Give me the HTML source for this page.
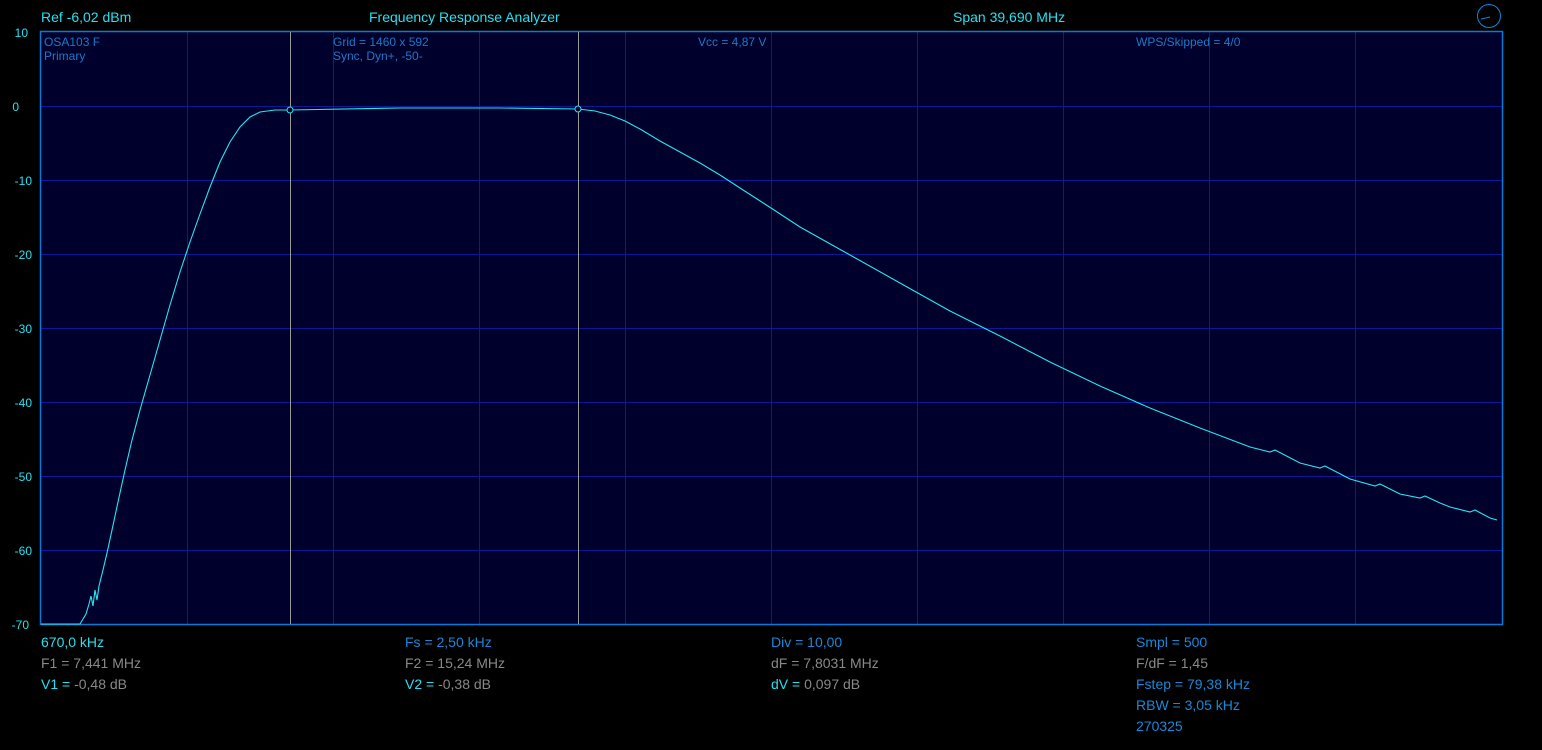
<!DOCTYPE html><html><head><meta charset="utf-8"><style>html,body{margin:0;padding:0;background:#000;width:1542px;height:750px;overflow:hidden}svg{display:block}text{font-family:"Liberation Sans",sans-serif}</style></head><body>
<svg width="1542" height="750" xmlns="http://www.w3.org/2000/svg">
<rect width="1542" height="750" fill="#000"/>
<rect x="41" y="32" width="1461" height="592" fill="#00002c"/>
<g stroke="#0b1a96" stroke-width="1">
<path d="M41 106.5H1502M41 180.5H1502M41 254.5H1502M41 328.5H1502M41 402.5H1502M41 476.5H1502M41 550.5H1502"/>
<path d="M187.5 32V624M333.5 32V624M479.5 32V624M625.5 32V624M771.5 32V624M917.5 32V624M1063.5 32V624M1209.5 32V624M1355.5 32V624"/>
</g>
<rect x="40.5" y="31.5" width="1462" height="593" fill="none" stroke="#0a7ad8" stroke-width="1.5"/>
<path d="M290.5 32V624M578.5 32V624" stroke="#9a9a9a" stroke-width="1"/>
<polyline fill="none" stroke="#22e8f0" stroke-width="1.1" points="41,624 80,624 86,614 89,604 91,596 93,606 95,590 97,600 99,586 103,570 107,553 112,530 118,502 125,470 132,440 140,410 150,375 160,340 170,305 180,272 190,242 200,214 210,187 220,162 230,142 240,127 250,117 260,112 275,110 290,110 400,108 500,108 578,109 595,111 610,115 625,121 640,129 660,141 680,152 700,163 720,175 740,188 771,208 800,227 850,255 900,283 950,311 1000,336 1050,362 1100,386 1150,408 1200,428 1250,447 1270,452 1275,450 1300,463 1320,468 1325,466 1350,479 1375,486 1380,484 1400,494 1420,498 1425,496 1440,503 1450,507 1470,512 1475,510 1490,518 1497,520"/>
<circle cx="290" cy="110" r="3" fill="#00002c" stroke="#22e8f0"/>
<circle cx="578" cy="109" r="3" fill="#00002c" stroke="#22e8f0"/>
<circle cx="1489" cy="16" r="11.5" fill="none" stroke="#0a8ad8" stroke-width="1"/>
<path d="M1481 19L1490 17" stroke="#0a8ad8"/>
<g font-size="12" fill="#26e0f0" text-anchor="end">
<text x="28" y="37">10</text><text x="19" y="111">0</text><text x="32" y="185">-10</text><text x="32" y="259">-20</text><text x="32" y="333">-30</text><text x="32" y="407">-40</text><text x="32" y="481">-50</text><text x="32" y="555">-60</text><text x="29" y="629">-70</text>
</g>
<g font-size="14" fill="#26e0f0">
<text x="41" y="22">Ref  -6,02 dBm</text>
<text x="369" y="22">Frequency Response Analyzer</text>
<text x="953" y="22">Span 39,690 MHz</text>
</g>
<g font-size="12" fill="#1a7ac8">
<text x="44" y="46">OSA103 F</text><text x="44" y="60">Primary</text>
<text x="333" y="46">Grid = 1460 x 592</text><text x="333" y="60">Sync,  Dyn+,  -50-</text>
<text x="698" y="46">Vcc = 4,87 V</text>
<text x="1136" y="46">WPS/Skipped  = 4/0</text>
</g>
<g font-size="14">
<text x="41" y="647" fill="#26e0f0">670,0 kHz</text>
<text x="41" y="668" fill="#888">F1 = 7,441 MHz</text>
<text x="41" y="689" fill="#888"><tspan fill="#26e0f0">V1 =</tspan> -0,48 dB</text>
<text x="405" y="647" fill="#1a88d8">Fs = 2,50 kHz</text>
<text x="405" y="668" fill="#888">F2 = 15,24 MHz</text>
<text x="405" y="689" fill="#888"><tspan fill="#26e0f0">V2 =</tspan> -0,38 dB</text>
<text x="771" y="647" fill="#1a88d8">Div = 10,00</text>
<text x="771" y="668" fill="#888">dF = 7,8031 MHz</text>
<text x="771" y="689" fill="#888"><tspan fill="#26e0f0">dV =</tspan> 0,097 dB</text>
<text x="1136" y="647" fill="#1a88d8">Smpl = 500</text>
<text x="1136" y="668" fill="#888">F/dF = 1,45</text>
<text x="1136" y="689" fill="#1a88d8">Fstep = 79,38 kHz</text>
<text x="1136" y="710" fill="#1a88d8">RBW = 3,05 kHz</text>
<text x="1136" y="731" fill="#1a88d8">270325</text>
</g>
</svg>
</body></html>
